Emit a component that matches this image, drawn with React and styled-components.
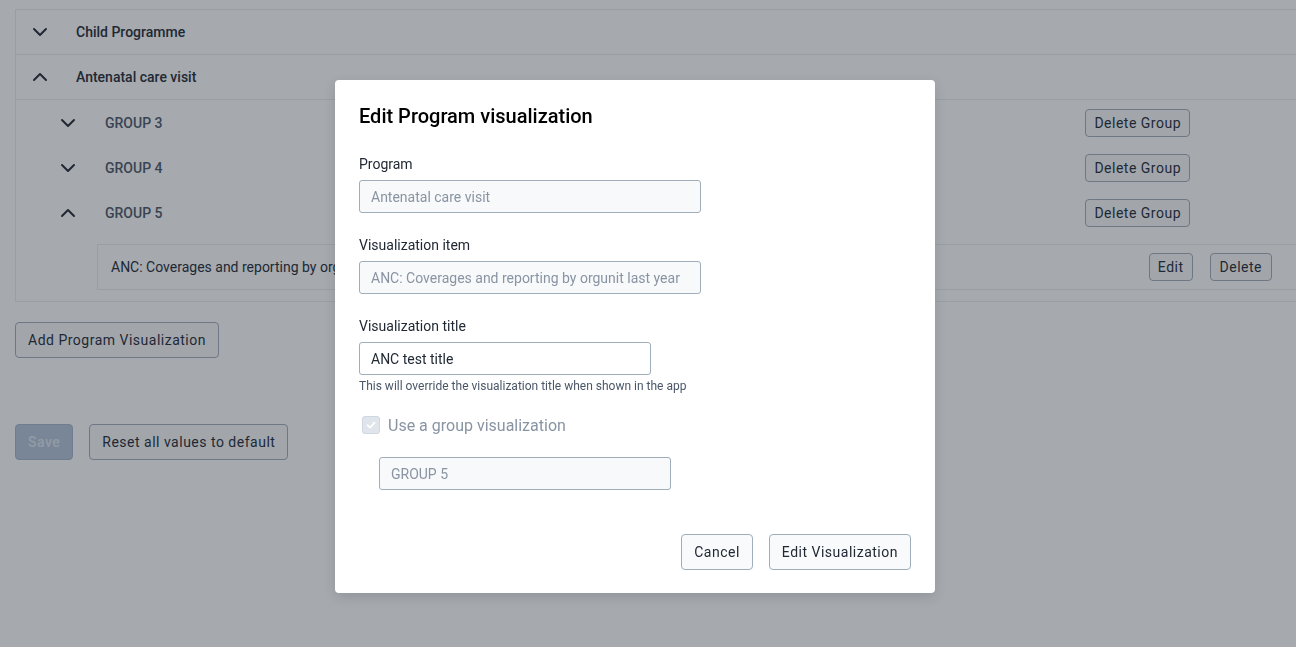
import React from 'react';
import styled, { createGlobalStyle } from 'styled-components';
import { ChevronDown, ChevronUp } from 'lucide-react';

const GlobalStyle = createGlobalStyle`
    html, body {
        margin: 0;
        padding: 0;
        background: #ffffff;
        overflow: hidden;
        font-family: Roboto, "Liberation Sans", sans-serif;
        color: #212934;
    }
    * { box-sizing: border-box; }
`;

const Page = styled.div`
    width: 1296px;
    height: 647px;
    padding: 9px 0 0 15px;
    overflow: hidden;
`;

const Accordion = styled.div`
    width: 1300px;
    border: 1px solid #e8edf2;
    border-right: none;
`;

const TopRow = styled.div`
    display: flex;
    align-items: center;
    height: 45px;
    padding-left: 12px;
    gap: 24px;
    border-bottom: 1px solid #e8edf2;
    font-size: 14px;
    font-weight: 500;
    color: #212934;
    svg { color: #212934; flex: none; }
`;

const Nested = styled.div`
    padding-bottom: 11px;
`;

const GroupRow = styled.div`
    display: flex;
    align-items: center;
    height: 45px;
    padding-left: 40px;
    font-size: 14px;
    font-weight: 500;
    color: #4a5768;
    svg { color: #212934; flex: none; }
`;

const GroupName = styled.span`
    margin-left: 25px;
    flex: 1;
`;

const ItemBox = styled.div`
    display: flex;
    align-items: center;
    height: 46px;
    margin: 9px 0 0 81px;
    padding: 0 28px 0 13px;
    border: 1px solid #e8edf2;
    border-right: none;
    font-size: 14px;
    color: #212934;
    width: 1203px;
`;

const ItemText = styled.span`
    flex: 1;
`;

const Button = styled.button`
    font-family: Roboto, "Liberation Sans", sans-serif;
    font-size: 14px;
    letter-spacing: 0.5px;
    color: #212934;
    background: #f9fafb;
    border: 1px solid #a0adba;
    border-radius: 4px;
    height: ${p => p.$h || 36}px;
    padding: 0 ${p => p.$px || 12}px;
    cursor: pointer;
    flex: none;
`;

const PrimaryButton = styled(Button)`
    background: #b3c5da;
    border-color: #a3b6cc;
    color: rgba(255, 255, 255, 0.6);
    font-weight: 500;
`;

const ActionGap = styled.div`
    width: ${p => p.$w}px;
    flex: none;
`;

const PageButtons = styled.div`
    display: flex;
    gap: 16px;
    margin-top: ${p => p.$mt}px;
`;

const Overlay = styled.div`
    position: fixed;
    inset: 0;
    background: rgba(33, 41, 52, 0.4);
    display: flex;
    align-items: flex-start;
    padding: 80px 0 0 335px;
`;

const Modal = styled.div`
    width: 600px;
    background: #ffffff;
    border-radius: 4px;
    padding: 24px 24px 23px 24px;
    box-shadow: 0 4px 12px rgba(33, 41, 52, 0.15);
`;

const Title = styled.h2`
    margin: 0;
    font-size: 20px;
    line-height: 24px;
    font-weight: 500;
    color: #000000;
`;

const Field = styled.div`
    display: flex;
    flex-direction: column;
    margin-top: ${p => p.$mt}px;
    padding-left: ${p => p.$indent || 0}px;
`;

const Label = styled.label`
    font-size: 14px;
    line-height: 16px;
    color: #212934;
    margin-bottom: 8px;
`;

const Input = styled.div`
    width: ${p => p.$w}px;
    height: 33px;
    display: flex;
    align-items: center;
    padding: 0 11px;
    font-size: 14px;
    border: 1px solid #a0adba;
    border-radius: 3px;
    background: ${p => (p.$disabled ? '#f8f9fa' : '#ffffff')};
    color: ${p => (p.$disabled ? '#8994a3' : '#212934')};
`;

const Help = styled.div`
    font-size: 12px;
    line-height: 14px;
    margin-top: 4px;
    color: #4a5768;
`;

const CheckRow = styled.div`
    display: flex;
    align-items: center;
    height: 24px;
    margin-top: 20px;
    padding-left: 3px;
    gap: 8px;
    font-size: 16px;
    color: #8994a3;
`;

const CheckBox = styled.span`
    width: 18px;
    height: 18px;
    border-radius: 3px;
    background: #dfe5eb;
    border: 1px solid #cfd7e0;
    display: flex;
    align-items: center;
    justify-content: center;
`;

const Footer = styled.div`
    display: flex;
    justify-content: flex-end;
    gap: 16px;
    margin-top: 44px;
`;

function Chevron({ up }) {
    return up ? <ChevronUp size={24} strokeWidth={2} /> : <ChevronDown size={24} strokeWidth={2} />;
}

const groups = [
    { name: 'GROUP 3', open: false },
    { name: 'GROUP 4', open: false },
    { name: 'GROUP 5', open: true },
];

export default function App() {
    return (
        <>
            <GlobalStyle />
            <Page>
                <Accordion>
                    <TopRow>
                        <Chevron />
                        <span>Child Programme</span>
                    </TopRow>
                    <TopRow>
                        <Chevron up />
                        <span>Antenatal care visit</span>
                    </TopRow>
                    <Nested>
                        {groups.map(g => (
                            <GroupRow key={g.name}>
                                <Chevron up={g.open} />
                                <GroupName>{g.name}</GroupName>
                                <Button $h={28} $px={8}>Delete Group</Button>
                                <ActionGap $w={125} />
                            </GroupRow>
                        ))}
                        <ItemBox>
                            <ItemText>ANC: Coverages and reporting by orgunit last year</ItemText>
                            <Button $h={28} $px={8}>Edit</Button>
                            <ActionGap $w={17} />
                            <Button $h={28} $px={9}>Delete</Button>
                        </ItemBox>
                    </Nested>
                </Accordion>
                <PageButtons $mt={20}>
                    <Button>Add Program Visualization</Button>
                </PageButtons>
                <PageButtons $mt={66}>
                    <PrimaryButton>Save</PrimaryButton>
                    <Button>Reset all values to default</Button>
                </PageButtons>
            </Page>
            <Overlay>
                <Modal>
                    <Title>Edit Program visualization</Title>
                    <Field $mt={28}>
                        <Label>Program</Label>
                        <Input $w={342} $disabled>Antenatal care visit</Input>
                    </Field>
                    <Field $mt={24}>
                        <Label>Visualization item</Label>
                        <Input $w={342} $disabled>ANC: Coverages and reporting by orgunit last year</Input>
                    </Field>
                    <Field $mt={24}>
                        <Label>Visualization title</Label>
                        <Input $w={292}>ANC test title</Input>
                        <Help>This will override the visualization title when shown in the app</Help>
                    </Field>
                    <CheckRow>
                        <CheckBox>
                            <svg width="12" height="12" viewBox="0 0 12 12">
                                <path d="M2.5 6.2 L5 8.6 L9.6 3.6" fill="none" stroke="#ffffff" strokeWidth="1.8" strokeLinecap="round" strokeLinejoin="round" />
                            </svg>
                        </CheckBox>
                        <span>Use a group visualization</span>
                    </CheckRow>
                    <Field $mt={20} $indent={20}>
                        <Input $w={292} $disabled>GROUP 5</Input>
                    </Field>
                    <Footer>
                        <Button>Cancel</Button>
                        <Button>Edit Visualization</Button>
                    </Footer>
                </Modal>
            </Overlay>
        </>
    );
}
